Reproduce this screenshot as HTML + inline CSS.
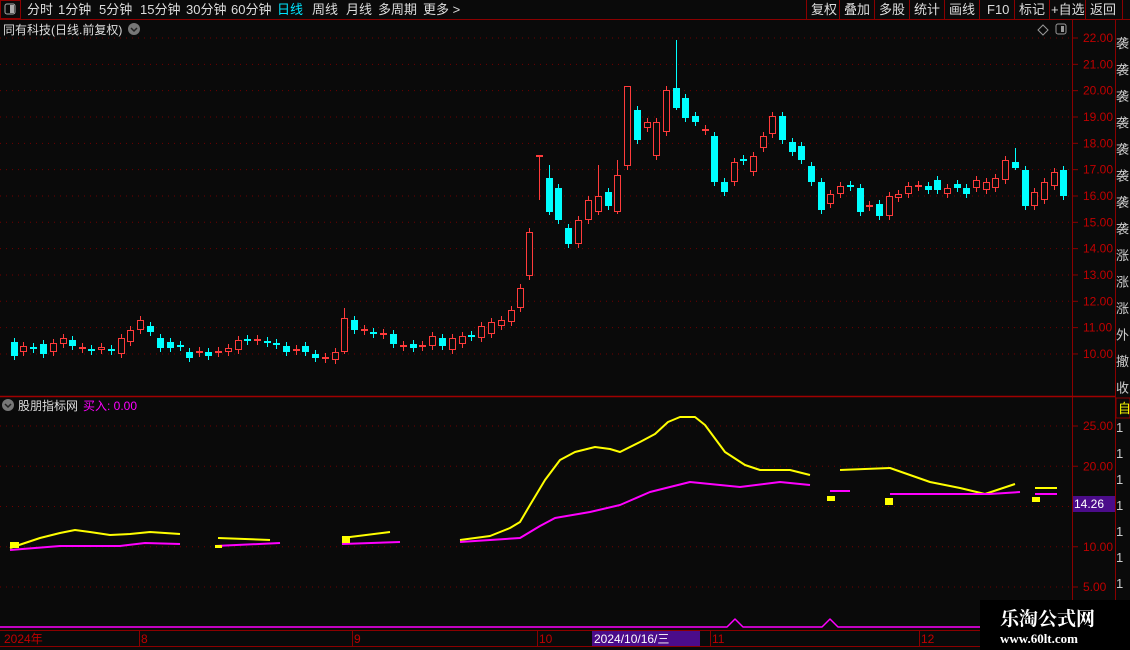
<!DOCTYPE html>
<html><head><meta charset="utf-8">
<style>
body{margin:0;background:#0a0a0a;width:1130px;height:650px;overflow:hidden;position:relative;font-family:"Liberation Sans","Noto Sans CJK SC",sans-serif;}
</style></head><body>
<svg id="s" width="1130" height="650" style="position:absolute;left:0;top:0" font-family="Liberation Sans, Noto Sans CJK SC, sans-serif">
<rect x="0" y="0" width="1130" height="19" fill="#0a0a0a"/>
<line x1="0" y1="19.5" x2="1130" y2="19.5" stroke="#8b0000"/>
<rect x="0.5" y="0.5" width="20" height="18" fill="none" stroke="#8b0000"/>
<rect x="5" y="4" width="10" height="10" rx="2" fill="none" stroke="#aaa"/><rect x="10" y="5" width="4" height="8" fill="#aaa"/>
<g font-size="13" fill="#ddd">
<text x="27" y="14">分时</text><text x="58" y="14">1分钟</text><text x="99" y="14">5分钟</text><text x="140" y="14">15分钟</text><text x="186" y="14">30分钟</text><text x="231" y="14">60分钟</text>
<text x="277" y="14" fill="#00e5ff">日线</text><text x="312" y="14">周线</text><text x="346" y="14">月线</text><text x="378" y="14">多周期</text><text x="423" y="14">更多 &gt;</text>
</g>
<g stroke="#8b0000"><line x1="806.5" y1="0" x2="806.5" y2="19"/><line x1="839.5" y1="0" x2="839.5" y2="19"/><line x1="874.5" y1="0" x2="874.5" y2="19"/><line x1="909.5" y1="0" x2="909.5" y2="19"/><line x1="944.5" y1="0" x2="944.5" y2="19"/><line x1="979.5" y1="0" x2="979.5" y2="19"/><line x1="1014.5" y1="0" x2="1014.5" y2="19"/><line x1="1049.5" y1="0" x2="1049.5" y2="19"/><line x1="1085.5" y1="0" x2="1085.5" y2="19"/><line x1="1122.5" y1="0" x2="1122.5" y2="19"/></g>
<g font-size="13" fill="#ddd"><text x="811" y="14">复权</text><text x="844" y="14">叠加</text><text x="879" y="14">多股</text><text x="914" y="14">统计</text><text x="949" y="14">画线</text><text x="987" y="14">F10</text><text x="1019" y="14">标记</text><text x="1051" y="14">+自选</text><text x="1090" y="14">返回</text></g>
<text x="3" y="34" font-size="12" fill="#ddd">同有科技(日线.前复权)</text>
<circle cx="134" cy="29" r="6" fill="#777"/><path d="M131 28l3 3 3-3" stroke="#222" stroke-width="1.5" fill="none"/>
<path d="M1043 25l5 5-5 5-5-5z" fill="none" stroke="#999"/>
<rect x="1056" y="24" width="10" height="10" rx="2" fill="none" stroke="#999"/><rect x="1061" y="26" width="3" height="6" fill="#999"/>
<line x1="1072.5" y1="20" x2="1072.5" y2="630" stroke="#8b0000"/>
<line x1="1115.5" y1="20" x2="1115.5" y2="650" stroke="#8b0000"/>
<line x1="0" y1="396.5" x2="1115" y2="396.5" stroke="#a00000" stroke-width="1.5"/>
<line x1="0" y1="630.5" x2="1130" y2="630.5" stroke="#8b0000"/>
<line x1="0" y1="646.5" x2="1130" y2="646.5" stroke="#8b0000"/>
<g id="grid" stroke="#700000" stroke-dasharray="1 5"></g>
<g id="ax" font-size="12" fill="#c00000"></g>
<g id="c"></g>
<circle cx="8" cy="405" r="6" fill="#777"/><path d="M5 404l3 3 3-3" stroke="#222" stroke-width="1.5" fill="none"/>
<text x="18" y="410" font-size="12" fill="#ddd">股朋指标网</text>
<text x="83" y="410" font-size="12" fill="#ff00ff">买入: 0.00</text>
<g fill="none" stroke-width="2" stroke-linejoin="round">
<polyline stroke="#ffff00" points="10,548 40,538 60,533 75,530 90,532 110,535 130,534 150,532 165,533 180,534"/>
<polyline stroke="#ffff00" points="218,538 270,540"/>
<polyline stroke="#ffff00" points="342,538 390,532"/>
<polyline stroke="#ffff00" points="460,540 490,536 510,528 520,522 530,505 545,480 560,460 575,452 595,447 610,449 620,452 640,442 655,434 668,422 680,417 695,417 705,425 725,452 745,465 760,470 790,470 810,475"/>
<polyline stroke="#ffff00" points="840,470 890,468 930,482 960,488 985,494 1015,484"/>
<polyline stroke="#ffff00" points="1035,488 1057,488"/>
<polyline stroke="#ff00ff" points="10,550 60,546 120,546 145,543 180,544"/>
<polyline stroke="#ff00ff" points="215,546 280,543"/>
<polyline stroke="#ff00ff" points="342,544 400,542"/>
<polyline stroke="#ff00ff" points="460,542 520,538 540,526 555,518 590,512 620,505 650,492 690,482 740,487 780,482 810,485"/>
<polyline stroke="#ff00ff" points="830,491 850,491"/>
<polyline stroke="#ff00ff" points="890,494 990,494 1020,492"/>
<polyline stroke="#ff00ff" points="1035,494 1057,494"/>
<polyline stroke="#ff00ff" stroke-width="1.5" points="0,627 727,627 735,619 743,627 822,627 830,619 838,627 1072,627"/>
</g>
<g fill="#ffff00"><rect x="10" y="542" width="9" height="6"/><rect x="342" y="536" width="8" height="7"/><rect x="827" y="496" width="8" height="5"/><rect x="885" y="498" width="8" height="7"/><rect x="1032" y="497" width="8" height="5"/><rect x="215" y="545" width="7" height="3"/></g>
<rect x="1073" y="496" width="42" height="16" fill="#4b0c8a"/>
<text x="1074" y="508" font-size="12" fill="#fff">14.26</text>
<g font-size="12" fill="#c00000"><text x="4" y="643">2024年</text><text x="141" y="643">8</text><text x="354" y="643">9</text><text x="539" y="643">10</text><text x="712" y="643">11</text><text x="921" y="643">12</text></g>
<g stroke="#8b0000"><line x1="139.5" y1="631" x2="139.5" y2="646"/><line x1="352.5" y1="631" x2="352.5" y2="646"/><line x1="537.5" y1="631" x2="537.5" y2="646"/><line x1="710.5" y1="631" x2="710.5" y2="646"/><line x1="919.5" y1="631" x2="919.5" y2="646"/></g>
<rect x="592" y="631" width="108" height="15" fill="#4b0c8a"/>
<text x="594" y="643" font-size="12" fill="#fff">2024/10/16/三</text>
<g font-size="13" fill="#ccc" id="rs"></g>
<rect x="1116" y="398" width="14" height="20" fill="#0a0a0a" stroke="#8b0000"/>
<text x="1118" y="413" font-size="13" fill="#ffff00">自</text>
<rect x="980" y="600" width="150" height="50" fill="#000"/>
<text x="1000" y="625" font-size="19" font-weight="bold" fill="#fff" font-family="Noto Serif CJK SC, serif">乐淘公式网</text>
<text x="1000" y="643" font-size="13" font-weight="bold" fill="#fff" font-family="Liberation Serif, serif">www.60lt.com</text>
</svg>
<script>
var s='http://www.w3.org/2000/svg';
function el(p,t,a){var e=document.createElementNS(s,t);for(var k in a)e.setAttribute(k,a[k]);document.getElementById(p).appendChild(e);return e;}
for(var p=10;p<=22;p++){var y=38+(22-p)*26.33;el('grid','line',{x1:0,y1:y,x2:1072,y2:y});el('ax','line',{x1:1072,y1:y,x2:1078,y2:y,stroke:'#8b0000'});var t=el('ax','text',{x:1083,y:y+4});t.textContent=p.toFixed(2);}
[25,20,15,10,5].forEach(function(v){var y=426+(25-v)*8.05;el('grid','line',{x1:0,y1:y,x2:1072,y2:y});el('ax','line',{x1:1072,y1:y,x2:1078,y2:y,stroke:'#8b0000'});if(v!=15){var t=el('ax','text',{x:1083,y:y+4});t.textContent=v.toFixed(2);}});
var d="14 c 342 356,23 r 346 352,33 c 347 349,43 c 344 354,53 r 343 352,63 r 338 344,72 c 340 346,82 r 347 349,91 c 349 351,101 r 347 350,111 c 349 351,121 r 338 354,130 r 330 342,140 r 320 330,150 c 326 332,160 c 338 348,170 c 342 348,180 c 345 347,189 c 352 358,199 r 351 353,208 c 352 356,218 r 351 353,228 r 348 352,238 r 340 350,247 c 339 341,257 r 339 341,267 c 341 343,276 c 343 345,286 c 346 352,296 r 349 351,305 c 346 352,315 c 354 358,325 r 357 359,335 r 352 360,344 r 318 352,354 c 320 330,364 r 329 331,373 c 332 334,383 r 333 335,393 c 334 344,403 r 345 347,413 c 344 348,422 r 345 347,432 r 336 346,442 c 338 346,452 r 338 350,462 r 336 344,471 c 335 337,481 r 326 338,491 r 322 334,501 r 320 326,511 r 310 322,520 r 288 308,529 r 232 276,539 r 155 157,549 c 178 212,558 c 188 220,568 c 228 244,578 r 220 244,588 r 200 220,598 r 196 212,608 c 192 206,617 r 175 212,627 r 86 166,637 c 110 140,647 r 122 128,656 r 122 156,666 r 90 132,676 c 88 108,685 c 98 118,695 c 116 122,705 r 129 131,714 c 136 182,724 c 182 192,734 r 162 182,743 c 159 161,753 r 156 172,763 r 136 148,772 r 116 134,782 c 116 140,792 c 142 152,801 c 146 160,811 c 166 182,821 c 182 210,830 r 194 204,840 r 186 194,850 c 185 187,860 c 188 212,869 r 205 207,879 c 204 216,889 r 196 216,898 r 194 198,908 r 186 194,918 r 185 187,928 c 186 190,937 c 180 190,947 r 188 194,957 c 184 188,966 c 188 194,976 r 180 188,986 r 182 190,995 r 178 188,1005 r 160 180,1015 c 162 168,1025 c 170 206,1034 r 192 206,1044 r 182 200,1054 r 172 186,1063 c 170 196";
var wk={539:[155,200],627:[86,170],676:[40,110],617:[160,214],549:[165,215],598:[165,215],1015:[148,170],344:[308,354]};
d.split(',').forEach(function(q){var a=q.split(' ');var x=+a[0],c=a[1],t=+a[2],b=+a[3];var col=c=='r'?'#ff3b3b':'#00ffff';var w=wk[x]||[t-4,b+4];
el('c','line',{x1:x+.5,y1:w[0],x2:x+.5,y2:w[1],stroke:col});
if(c=='r')el('c','rect',{x:x-2.5,y:t+.5,width:6,height:Math.max(b-t-1,1),fill:'#0a0a0a',stroke:col});
else el('c','rect',{x:x-3,y:t,width:7,height:Math.max(b-t,2),fill:col});});
var chars='袭袭袭袭袭袭袭袭涨涨涨外撤收';
for(var i=0;i<14;i++){var t=el('rs','text',{x:1116,y:48+i*26.5});t.textContent=chars[i%chars.length];}
for(var i=0;i<8;i++){var t=el('rs','text',{x:1116,y:432+i*26});t.textContent='1';}
</script>
</body></html>
